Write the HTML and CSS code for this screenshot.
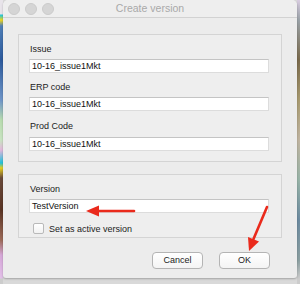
FILE: index.html
```html
<!DOCTYPE html>
<html lang="en">
<head>
  <meta charset="UTF-8">
  <title>Create version</title>
  <link rel="stylesheet" href="styles.css">
</head>
<body>

<div class="window">
  <div class="titlebar">
    <div class="lights">
      <span class="light"></span>
      <span class="light"></span>
      <span class="light"></span>
    </div>
    <div class="title">Create version</div>
  </div>

  <div class="content">
    <div class="group">
      <div class="label">Issue</div>
      <div class="field">10-16_issue1Mkt</div>
      <div class="label next">ERP code</div>
      <div class="field">10-16_issue1Mkt</div>
      <div class="label next third">Prod Code</div>
      <div class="field lower">10-16_issue1Mkt</div>
    </div>

    <div class="group second">
      <div class="label">Version</div>
      <div class="field">TestVersion</div>
      <div class="check-row">
        <span class="checkbox"></span>
        <span class="check-label">Set as active version</span>
      </div>
    </div>

    <div class="buttons">
      <div class="button">Cancel</div>
      <div class="button">OK</div>
    </div>
  </div>
</div>

<svg class="arrows" width="300" height="284" viewBox="0 0 300 284">
  <line x1="134" y1="211" x2="97" y2="211" stroke="#ea2a1c" stroke-width="2.6" stroke-linecap="round"/>
  <polygon points="86,211 99,205.5 99,216.5" fill="#ea2a1c"/>
  <line x1="267" y1="207" x2="253.5" y2="239" stroke="#ea2a1c" stroke-width="2.6" stroke-linecap="round"/>
  <polygon points="249,251 259,241.5 248,237" fill="#ea2a1c"/>
</svg>

</body>
</html>
```

FILE: styles.css
```css
body {
  margin: 0;
  height: 284px;
  overflow: hidden;
  font-family: 'Liberation Sans', Arial, sans-serif;
  background:
    linear-gradient(#e8e4ea 0, #e8e4ea 14px, #1ec8e0 15px, #f2d81c 20px, #4f7fb8 26px, #2c5a9c 60px, #6f95c8 100px, #b9dcb0 120px, #c9e4c2 140px, #e2b8dc 150px, #20c2dc 163px, #e8d020 168px, #6a4a3a 178px, #5a3424 210px, #9c6a58 240px, #d6a8d8 255px, #e2c0e8 278px, #cccccc 279px) left top / 3px 100% no-repeat,
    linear-gradient(#d8cce0 0, #9aa2a8 20px, #7a6a4c 60px, #a89a70 100px, #c0b4a0 140px, #98b4a8 180px, #6c8aa0 220px, #8a9ea0 260px, #cccccc 279px) right top / 3px 100% no-repeat,
    #d9d9d9;
}
.window {
  margin-left: 3px;
  width: 294px;
  height: 278px;
  background: #ececec;
  border-radius: 5px 5px 3px 3px;
  box-shadow: 0 1px 2px rgba(0, 0, 0, 0.25);
  color: #222;
}
.titlebar {
  position: relative;
  height: 17px;
  border-bottom: 1px solid #d2d2d2;
  background: #eeeeee;
  border-radius: 5px 5px 0 0;
}
.lights {
  display: flex;
  gap: 5px;
  padding: 3px 0 0 5px;
}
.light {
  width: 10px;
  height: 10px;
  border-radius: 50%;
  background: #d5d5d5;
  border: 0.5px solid #cbcbcb;
}
.title {
  position: absolute;
  left: 0;
  right: 0;
  top: 2px;
  text-align: center;
  font-size: 10.5px;
  color: #a9a9a9;
}
.content {
  padding: 16px 15px 0 15px;
}
.group {
  border: 1px solid #d4d4d4;
  background: #eeeeee;
  padding: 9px 12px 10px 10px;
}
.group.second {
  margin-top: 12px;
  padding-bottom: 3px;
}
.label {
  font-size: 9px;
  line-height: 11px;
  height: 11px;
  margin-bottom: 4px;
  padding-left: 1px;
}
.label.next {
  margin-top: 9px;
}
.label.third {
  margin-top: 10px;
}
.field.lower {
  margin-top: 5px;
}
.field {
  height: 14px;
  box-sizing: border-box;
  background: #fff;
  border: 1px solid #dcdcdc;
  border-top-color: #c4c4c4;
  font-size: 9px;
  line-height: 12px;
  padding-left: 2px;
  color: #111;
}
.check-row {
  display: flex;
  align-items: center;
  margin-top: 10px;
  padding-left: 4px;
  height: 11px;
}
.checkbox {
  width: 11px;
  height: 11px;
  box-sizing: border-box;
  border: 1px solid #b9b9b9;
  border-radius: 2px;
  background: linear-gradient(#ffffff, #f2f2f2);
}
.check-label {
  margin-left: 5px;
  font-size: 9px;
}
.buttons {
  display: flex;
  justify-content: flex-end;
  gap: 16px;
  margin-top: 14px;
  padding-right: 12px;
}
.button {
  width: 51px;
  height: 17px;
  box-sizing: border-box;
  border: 1px solid #b4b4b4;
  border-radius: 4px;
  background: linear-gradient(#ffffff, #f4f4f4);
  font-size: 9px;
  line-height: 15px;
  text-align: center;
  color: #222;
}
.arrows {
  position: absolute;
  left: 0;
  top: 0;
}
```
